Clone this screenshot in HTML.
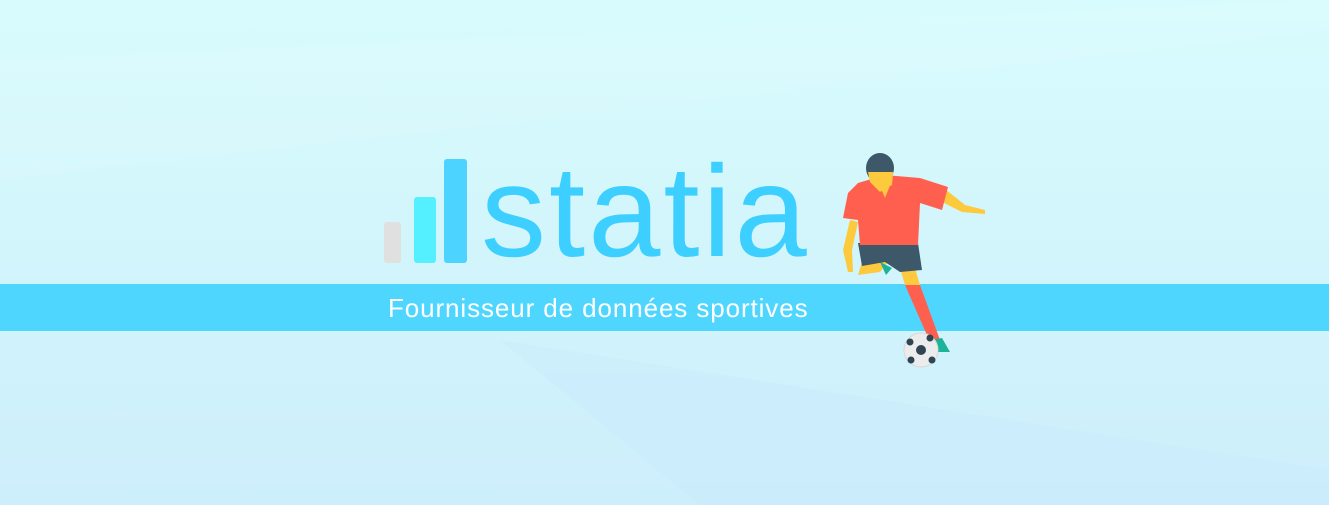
<!DOCTYPE html>
<html><head><style>
body{margin:0;width:1329px;height:505px;overflow:hidden;position:relative;font-family:"Liberation Sans",sans-serif;
background:linear-gradient(180deg,#d8fcfd 0%,#d2f5fc 50%,#cdeefb 100%);}
.band{position:absolute;left:0;top:284px;width:1329px;height:47px;background:#4fd6ff;}
.sub{position:absolute;left:388px;top:294px;color:#fff;font-size:26px;letter-spacing:0.9px;line-height:1.1;}
.bar{position:absolute;border-radius:3px;}
.logo{position:absolute;left:481px;top:146px;font-size:130px;color:#3dcfff;letter-spacing:3px;line-height:1;}
</style></head><body>
<svg width="1329" height="505" style="position:absolute;left:0;top:0">
<polygon points="0,60 1329,0 1329,30 0,180" fill="#ffffff" opacity="0.08"/>
<polygon points="500,340 1329,470 1329,505 700,505" fill="#c6e9fb" opacity="0.3"/>
</svg>
<div class="bar" style="left:384px;top:222px;width:17px;height:41px;background:#e0e0e0"></div>
<div class="bar" style="left:414px;top:197px;width:22px;height:66px;background:#55f0ff"></div>
<div class="bar" style="left:444px;top:159px;width:23px;height:104px;background:#4cd3ff"></div>
<div class="logo">statia</div>
<div class="band"></div>
<div class="sub">Fournisseur de données sportives</div>
<svg width="1329" height="505" style="position:absolute;left:0;top:0">
<path d="M850,220 L843,250 L848,272 L853,272 L852,250 L858,222Z" fill="#fdc93d"/>
<path d="M940,185 L965,205 L985,210 L985,214 L962,212 L938,200Z" fill="#fdc93d"/>
<path d="M862,262 L858,275 L880,272 L888,262Z" fill="#fdc93d"/>
<path d="M880,262 L886,275 L892,268Z" fill="#1bb39a"/>
<path d="M900,268 L915,268 L920,285 L905,285Z" fill="#fdc93d"/>
<path d="M905,285 L920,285 L940,340 L930,342Z" fill="#ff5f4e"/>
<path d="M930,340 L942,338 L950,352 L938,352Z" fill="#1bb39a"/>
<path d="M858,243 L918,243 L922,270 L900,272 L885,262 L862,266Z" fill="#3d5868"/>
<path d="M858,183 L885,175 L920,178 L948,187 L942,210 L920,203 L918,245 L860,245 L858,220 L843,218 L848,193Z" fill="#ff5f4e"/>
<path d="M876,177 L885,198 L893,178Z" fill="#fdc93d"/>
<ellipse cx="880" cy="168" rx="14" ry="15" fill="#3d5868"/>
<path d="M868,172 L893,172 L892,185 L880,192 L870,182Z" fill="#fdc93d"/>
<circle cx="921" cy="350" r="17" fill="#ececec" stroke="#d8d8d8" stroke-width="1"/>
<circle cx="921" cy="350" r="5" fill="#2f4553"/>
<circle cx="910" cy="342" r="3.5" fill="#2f4553"/>
<circle cx="930" cy="338" r="3.5" fill="#2f4553"/>
<circle cx="911" cy="360" r="3.5" fill="#2f4553"/>
<circle cx="932" cy="360" r="3.5" fill="#2f4553"/>
</svg>
</body></html>
